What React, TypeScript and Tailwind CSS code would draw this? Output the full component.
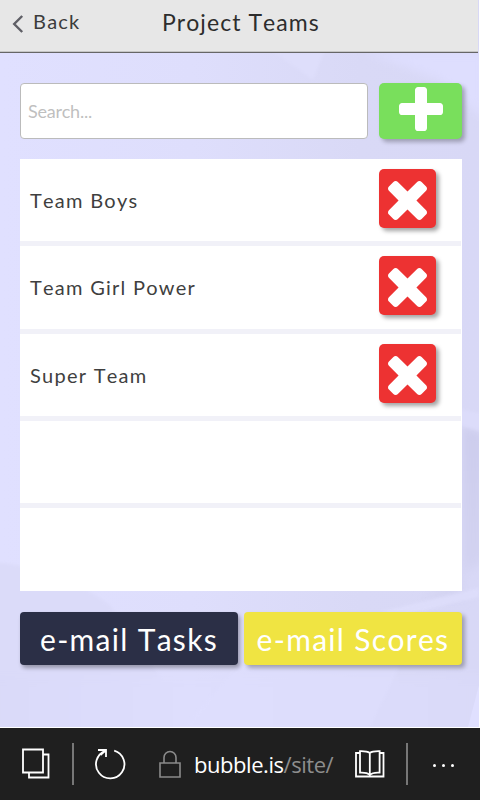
import React from 'react';

const PLUS =
  'M1600 736v192q0 40-28 68t-68 28h-416v416q0 40-28 68t-68 28h-192q-40 0-68-28t-28-68v-416h-416q-40 0-68-28t-28-68v-192q0-40 28-68t68-28h416v-416q0-40 28-68t68-28h192q40 0 68 28t28 68v416h416q40 0 68 28t28 68z';
const TIMES =
  'M1490 1322q0 40-28 68l-136 136q-28 28-68 28t-68-28l-294-294-294 294q-28 28-68 28t-68-28l-136-136q-28-28-28-68t28-68l294-294-294-294q-28-28-28-68t28-68l136-136q28-28 68-28t68 28l294 294 294-294q28-28 68-28t68 28l136 136q28 28 28 68t-28 68l-294 294 294 294q28 28 28 68z';

/** Soft folded-paper backdrop behind the page content. */
function Backdrop() {
  return (
    <svg className="absolute inset-0 -z-10" width="479" height="727" viewBox="0 0 479 727" aria-hidden="true">
      <defs>
        <linearGradient id="base" x1="0" y1="0" x2="1" y2="0">
          <stop offset="0" stopColor="#e0e0ff" />
          <stop offset="0.4" stopColor="#dedefc" />
          <stop offset="0.75" stopColor="#d9d9f6" />
          <stop offset="1" stopColor="#d8d8f6" />
        </linearGradient>
        <linearGradient id="side" x1="0" y1="0" x2="0" y2="1">
          <stop offset="0" stopColor="#cdcded" />
          <stop offset="1" stopColor="#d4d4f2" />
        </linearGradient>
        <linearGradient id="foot" x1="0" y1="0" x2="1" y2="0">
          <stop offset="0" stopColor="#d9d9f8" />
          <stop offset="0.4" stopColor="#dedefd" />
          <stop offset="1" stopColor="#d9d9f8" />
        </linearGradient>
        <filter id="soft" x="-20%" y="-20%" width="140%" height="140%">
          <feGaussianBlur stdDeviation="5" />
        </filter>
        <filter id="edge" x="-20%" y="-20%" width="140%" height="140%">
          <feGaussianBlur stdDeviation="1.5" />
        </filter>
      </defs>
      <rect width="479" height="727" fill="url(#base)" />
      <path d="M365 52H485V120L440 80Z" fill="#dedefe" filter="url(#soft)" />
      <path d="M274 52H324L313 80Z" fill="#dedefb" filter="url(#edge)" />
      <path d="M462 425L485 435V560L420 600H462Z" fill="url(#side)" filter="url(#soft)" />
      <path d="M455 408L485 414V432L455 424Z" fill="#dcdcfa" filter="url(#edge)" />
      <path d="M-5 562Q60 568 110 605L200 735H-5Z" fill="#dbdbf9" filter="url(#edge)" />
      <path d="M-20 675H500V750H-20Z" fill="url(#foot)" filter="url(#soft)" />
      <path d="M230 675L185 727H370L400 665H240Z" fill="#dfdffe" opacity="0.5" filter="url(#edge)" />
      <path d="M380 612L479 588V597L400 616Z" fill="#dfdffc" opacity="0.8" filter="url(#edge)" />
      <path d="M479 685L468 727H479Z" fill="#e0e0ff" />
    </svg>
  );
}

function RemoveButton() {
  return (
    <button
      aria-label="Remove team"
      className="mr-[26px] flex h-[59px] w-[57px] shrink-0 items-center justify-center rounded-[5px] bg-[#ed3232] pt-1 shadow-[3px_3px_4px_rgba(0,0,0,0.36)]"
    >
      <svg width="39" height="39" viewBox="302 366 1188 1188">
        <path d={TIMES} fill="#fff" />
      </svg>
    </button>
  );
}

const rows = [
  { name: 'Team Boys', height: 'h-[82px]' },
  { name: 'Team Girl Power', height: 'h-[83px]' },
  { name: 'Super Team', height: 'h-[82px]' },
  { name: '', height: 'h-[82px]' },
  { name: '', height: 'h-[83px]' },
];

export default function App() {
  return (
    <div className="flex h-[800px] w-[480px] flex-col overflow-hidden bg-white font-[Lato,sans-serif] [font-kerning:none]">
      <div className="relative isolate flex h-[727px] w-[479px] flex-col">
        <Backdrop />
        <header className="grid h-[53px] w-[478px] grid-cols-[162px_1fr] border-b border-[#666] bg-[#e7e7e7] shadow-[inset_0_-1px_0_#c6c6c6]">
          <button className="flex h-[44px] items-center pl-[12px] text-[20px] tracking-[1.2px] text-[#3c3c3c]">
            <svg className="mt-[3px] mr-[9px]" width="12" height="18" viewBox="0 0 12 18">
              <path d="M10.2 1L2.2 9L10.2 17" fill="none" stroke="#5f5f66" strokeWidth="2.4" />
            </svg>
            <span className="-mt-[2px]">Back</span>
          </button>
          <h1 className="flex h-[44px] items-center whitespace-nowrap text-[23px] tracking-[1.05px] text-[#2d2d2d]">
            Project Teams
          </h1>
        </header>

        <main className="flex flex-col pl-5 pt-[30px]">
          <div className="flex h-[56px] w-[442px] gap-[11px]">
            <input
              placeholder="Search..."
              className="w-[348px] rounded-[4px] border border-[#bbb] bg-white pl-[7px] text-[18px] tracking-[-0.25px] placeholder:text-[#bfbfbf] placeholder:opacity-100"
            />
            <button
              aria-label="Add team"
              className="flex w-[83px] items-start justify-center rounded-[5px] bg-[#79df5c] pt-1 shadow-[3px_3px_4px_rgba(0,0,0,0.28)]"
            >
              <svg width="44" height="44" viewBox="192 128 1408 1408">
                <path d={PLUS} fill="#fff" />
              </svg>
            </button>
          </div>

          <ul className="mt-5 flex w-[442px] flex-col bg-white">
            {rows.map((row, i) => (
              <React.Fragment key={i}>
                <li className={`flex items-start justify-between pl-[10px] pt-[10px] ${row.height}`}>
                  <span className="pt-[19px] text-[20px] leading-[24px] tracking-[1.25px] text-[#3f3f3f]">{row.name}</span>
                  {row.name && <RemoveButton />}
                </li>
                {i < rows.length - 1 && <li aria-hidden="true" className="h-[5px] w-[441px] bg-[#f1f1f8]" />}
              </React.Fragment>
            ))}
          </ul>

          <div className="mt-[21px] flex h-[53px] w-[442px] gap-[6px] text-[30px] tracking-[1.3px] text-white">
            <button className="flex w-[218px] items-center justify-center whitespace-nowrap rounded-[4px] bg-[#2b2f46] pt-[1px] shadow-[2px_3px_4px_rgba(0,0,0,0.32)]">
              e-mail Tasks
            </button>
            <button className="flex w-[218px] items-center justify-center whitespace-nowrap rounded-[4px] bg-[#f0e442] pt-[1px] shadow-[3px_3px_4px_rgba(0,0,0,0.28)]">
              e-mail Scores
            </button>
          </div>
        </main>
      </div>

      <footer className="mt-px flex h-[72px] items-center bg-[#1f1f1f]">
        <svg className="ml-[22px] -mt-[2px]" width="28" height="31" viewBox="0 0 28 31" fill="none" stroke="#fff" strokeWidth="1.8">
          <path d="M1 1.5H21V24.5H1Z" />
          <path d="M21 6.5H26.5V29.5H7V25" />
        </svg>
        <div className="ml-[22px] h-[42px] w-[2px] bg-[#777]" />
        <svg className="ml-[20px] -mt-[1px]" width="32" height="32" viewBox="0 0 32 32" fill="none" stroke="#fff" strokeWidth="1.8">
          <path d="M20.2 2.6A14.2 14.2 0 1 1 11.6 2.8" />
          <path d="M4 2H12V9M11.7 2.4L6.5 7" />
        </svg>
        <svg className="ml-[33px]" width="22" height="28" viewBox="0 0 22 28" fill="none" stroke="#8b8b8b" strokeWidth="1.6">
          <path d="M1 13H21V27H1ZM5 13V7.5A6 6 0 0 1 17 7.5V13" />
        </svg>
        <div className="ml-[13px] w-[141px] overflow-hidden whitespace-nowrap font-['Open_Sans',sans-serif] text-[22px] tracking-[-0.45px] text-white">
          bubble.is<span className="text-[#8d8d8d]">/site/</span>
        </div>
        <svg className="ml-[20px]" width="30" height="28" viewBox="0 0 30 28" fill="none" stroke="#fff" strokeWidth="1.8">
          <path d="M5 3H1V26.5H28.5V3H24.5" />
          <path d="M14.8 3Q12 1 5 1.2V22.6Q12 22.2 14.8 24.8Q17.5 22.2 24.6 22.6V1.2Q17.5 1 14.8 3V26" />
        </svg>
        <div className="ml-[21px] h-[42px] w-[2px] bg-[#777]" />
        <div className="ml-[25px] mt-[2px] flex gap-[6px]">
          <i className="size-[3px] rounded-full bg-white" />
          <i className="size-[3px] rounded-full bg-white" />
          <i className="size-[3px] rounded-full bg-white" />
        </div>
      </footer>
    </div>
  );
}
